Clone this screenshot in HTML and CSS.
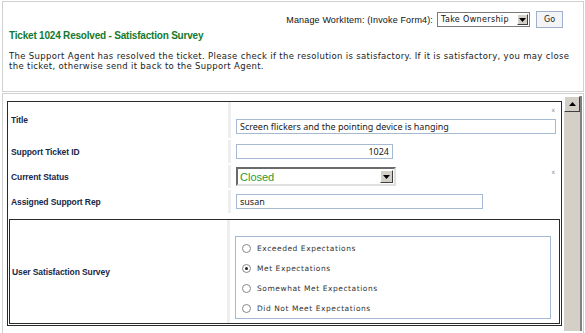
FILE: index.html
```html
<!DOCTYPE html>
<html lang="en">
<head>
    <meta charset="UTF-8">
    <title>Ticket 1024 Resolved - Satisfaction Survey</title>
    <link rel="stylesheet" href="styles.css">
</head>
<body>
    <div class="top">
        <div class="manage">
            <span class="manage-label">Manage WorkItem: (Invoke Form4):</span>
            <div class="mini-select">
                <span>Take Ownership</span>
                <span class="drop small">
                    <svg width="7" height="4" viewBox="0 0 7 4"><path d="M0 0h7L3.5 4z" fill="#000"/></svg>
                </span>
            </div>
            <button class="go">Go</button>
        </div>
        <h1>Ticket 1024 Resolved - Satisfaction Survey</h1>
        <p class="desc">The Support Agent has resolved the ticket. Please check if the resolution is satisfactory. If it is satisfactory, you may close the ticket, otherwise send it back to the Support Agent.</p>
    </div>

    <div class="lower">
        <div class="form-area">
            <div class="form-table">
                <div class="row row-title">
                    <div class="label">Title</div>
                    <div class="value">
                        <span class="req">x</span>
                        <div class="field w-title">Screen flickers and the pointing device is hanging</div>
                    </div>
                </div>
                <div class="row">
                    <div class="label">Support Ticket ID</div>
                    <div class="value">
                        <div class="field w-id num">1024</div>
                    </div>
                </div>
                <div class="row">
                    <div class="label">Current Status</div>
                    <div class="value">
                        <span class="req req-status">x</span>
                        <div class="status-select">
                            <span>Closed</span>
                            <span class="drop">
                                <svg width="7" height="4" viewBox="0 0 7 4"><path d="M0 0h7L3.5 4z" fill="#000"/></svg>
                            </span>
                        </div>
                    </div>
                </div>
                <div class="row">
                    <div class="label">Assigned Support Rep</div>
                    <div class="value">
                        <div class="field w-rep">susan</div>
                    </div>
                </div>
                <div class="survey-box">
                    <div class="label">User Satisfaction Survey</div>
                    <div class="value">
                        <div class="radio-list">
                            <div class="radio-item"><span class="radio"></span>Exceeded Expectations</div>
                            <div class="radio-item"><span class="radio checked"></span>Met Expectations</div>
                            <div class="radio-item"><span class="radio"></span>Somewhat Met Expectations</div>
                            <div class="radio-item"><span class="radio"></span>Did Not Meet Expectations</div>
                        </div>
                    </div>
                </div>
            </div>
        </div>
        <div class="scrollbar">
            <div class="scroll-up">
                <svg width="7" height="4" viewBox="0 0 7 4"><path d="M0 4h7L3.5 0z" fill="#000"/></svg>
            </div>
            <div class="track"></div>
        </div>
    </div>
</body>
</html>
```

FILE: styles.css
```css
body {
    margin: 0;
    background-color: #fff;
    font-family: "DejaVu Sans", Verdana, sans-serif;
    color: #222;
}
.top {
    margin: 1px 1px 0 2px;
    height: 89px;
    border: 1px solid #d0d0d0;
    padding: 0 6px;
}
.manage {
    display: flex;
    justify-content: flex-end;
    align-items: center;
    gap: 3px;
    padding: 9px 14px 0 0;
}
.manage-label {
    font-family: "Liberation Sans", Arial, sans-serif;
    font-size: 9px;
    letter-spacing: 0.15px;
    color: #111;
    margin-right: 1px;
}
.mini-select {
    display: flex;
    align-items: center;
    justify-content: space-between;
    width: 88px;
    height: 13px;
    border: 1px solid #7a7a7a;
    padding-left: 3px;
    font-size: 8px;
    letter-spacing: 0.35px;
    color: #111;
}
.drop {
    display: flex;
    align-items: center;
    justify-content: center;
    width: 13px;
    height: 13px;
    background-color: #d4d0c8;
    border: 1px solid;
    border-color: #fff #404040 #404040 #fff;
    box-sizing: border-box;
}
.drop.small {
    width: 11px;
    height: 11px;
    margin-right: 1px;
}
.go {
    margin-left: 3px;
    width: 27px;
    height: 17px;
    padding: 0;
    border: 1px solid #a0b0c8;
    background-color: #f4f4f4;
    font-family: "DejaVu Sans", Verdana, sans-serif;
    font-size: 8px;
    color: #222;
}
h1 {
    margin: 2px 0 0 0;
    font-family: "Liberation Sans", Arial, sans-serif;
    font-size: 10px;
    letter-spacing: -0.2px;
    color: #127a2e;
}
.desc {
    margin: 10px 0 0 0;
    font-size: 8.5px;
    letter-spacing: 0.33px;
    line-height: 10px;
    color: #222;
}
.lower {
    display: flex;
    margin: 1px 1px 0 2px;
    height: 235px;
    border: 1px solid #d0d0d0;
    padding: 2px 1px 2px 2px;
}
.form-area {
    flex: 1;
    padding: 5px 2px 0 2px;
}
.form-table {
    border: 1px solid #2a2a2a;
    padding: 0 1px 1px 1px;
    background-color: #fff;
}
.row {
    display: grid;
    grid-template-columns: 219px 1fr;
    column-gap: 3px;
    height: 23px;
    margin-bottom: 2px;
    background-color: #eeeeee;
}
.row-title {
    height: 36px;
}
.label, .value {
    background-color: #fff;
    display: flex;
    align-items: center;
    position: relative;
}
.label {
    padding-left: 2px;
    font-family: "Liberation Sans", Arial, sans-serif;
    font-weight: bold;
    font-size: 8.5px;
    letter-spacing: -0.1px;
    color: #17284a;
}
.value {
    padding-left: 5px;
}
.row-title .value {
    align-items: flex-end;
    padding-bottom: 4px;
}
.req {
    position: absolute;
    right: 5px;
    top: 4px;
    font-size: 6px;
    color: #888;
}
.req-status {
    top: 3px;
}
.field {
    height: 15px;
    box-sizing: border-box;
    border: 1px solid #a5b9d1;
    padding: 0 3px;
    font-family: "Noto Sans", sans-serif;
    font-size: 9px;
    line-height: 13px;
    color: #222;
    white-space: nowrap;
    overflow: hidden;
}
.w-title { width: 320px; }
.w-id { width: 157px; }
.w-rep { width: 247px; }
.num { text-align: right; }
.status-select {
    display: flex;
    align-items: center;
    justify-content: space-between;
    width: 160px;
    height: 19px;
    box-sizing: border-box;
    border: 2px solid;
    border-color: #6a6a6a #e0e0e0 #e0e0e0 #6a6a6a;
    padding: 0 1px 0 2px;
    font-family: "Liberation Sans", Arial, sans-serif;
    font-size: 11px;
    color: #2e9a2e;
}
.survey-box {
    display: grid;
    grid-template-columns: 217px 1fr;
    column-gap: 3px;
    height: 103px;
    margin-top: 6px;
    border: 1px solid #2a2a2a;
    background-color: #eeeeee;
}
.survey-box .value {
    padding-left: 5px;
    align-items: flex-end;
    padding-bottom: 4px;
}
.radio-list {
    width: 316px;
    height: 83px;
    box-sizing: border-box;
    border: 1px solid #a5b9d1;
    padding: 6px 0 0 6px;
    display: flex;
    flex-direction: column;
    gap: 9px;
}
.radio-item {
    display: flex;
    align-items: center;
    height: 11px;
    font-size: 7.5px;
    letter-spacing: 0.55px;
    color: #333;
}
.radio {
    width: 9px;
    height: 9px;
    box-sizing: border-box;
    border: 1px solid #888;
    border-radius: 50%;
    margin-right: 6px;
    background-color: #fff;
    position: relative;
}
.radio.checked::after {
    content: "";
    position: absolute;
    left: 2px;
    top: 2px;
    width: 3px;
    height: 3px;
    border-radius: 50%;
    background-color: #222;
}
.scrollbar {
    width: 16px;
    display: flex;
    flex-direction: column;
    border-right: 2px solid #808080;
}
.scroll-up {
    height: 16px;
    box-sizing: border-box;
    background-color: #d4d0c8;
    border: 1px solid;
    border-color: #fff #404040 #404040 #fff;
    display: flex;
    align-items: center;
    justify-content: center;
}
.track {
    flex: 1;
    background-color: #d4d0c8;
}
```
